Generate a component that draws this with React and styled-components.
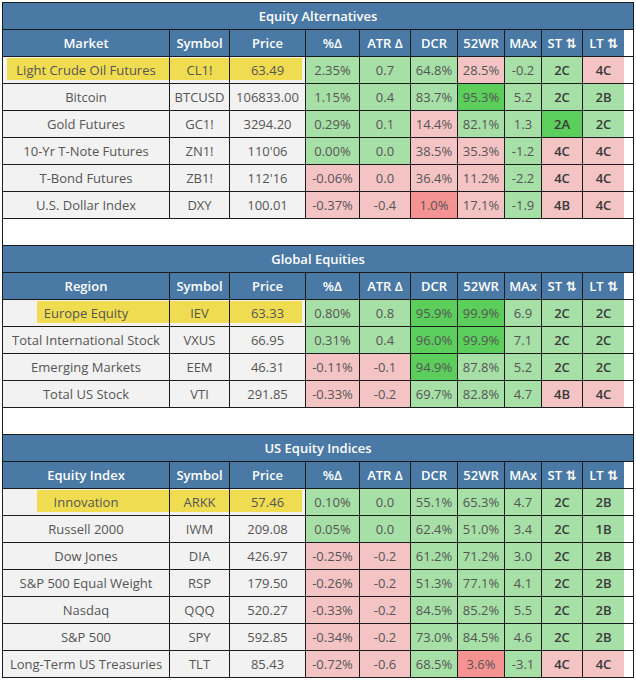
import React from "react";
import styled, { createGlobalStyle } from "styled-components";

const GlobalStyle = createGlobalStyle`
  body {
    margin: 0;
    background: #ffffff;
    font-family: "Open Sans", "DejaVu Sans", sans-serif;
  }
`

const COLS = "167px 60px 76px 54px 51px 47px 47px 37px 41px 41px"

const TONES = {
  n: "#f2f2f2",
  g: "#a7e0a7",
  d: "#5bce5b",
  p: "#f4c4c4",
  r: "#f59393",
}

const Board = styled.div`
  width: 630px;
  margin: 2px 0 0 2px;
  border: 1px solid #1b1b1b;
  border-bottom: none;
`

const TitleRow = styled.div`
  height: 26px;
  display: flex;
  align-items: center;
  justify-content: center;
  background: #4a79a5;
  color: #ffffff;
  font-size: 13px;
  font-weight: 600;
  border-bottom: 1px solid #1b1b1b;
`

const Row = styled.div`
  display: grid;
  grid-template-columns: ${COLS};
  height: 26px;
  border-bottom: 1px solid #1b1b1b;
`

const Spacer = styled.div`
  height: 26px;
  background: #ffffff;
  border-bottom: 1px solid #1b1b1b;
`

const HeadCell = styled.div`
  display: flex;
  align-items: center;
  justify-content: center;
  background: #4a79a5;
  color: #ffffff;
  font-size: 13px;
  font-weight: 600;
  white-space: nowrap;
  border-right: 1px solid #1b1b1b;
  &:last-child { border-right: none; }
`

const Cell = styled.div`
  display: flex;
  align-items: center;
  justify-content: center;
  white-space: nowrap;
  font-size: 13px;
  color: ${props => props.$bold ? "#3a3a3a" : "#555555"};
  font-weight: ${props => props.$bold ? 600 : 400};
  background: ${props => props.$mark
    ? `linear-gradient(#f0dc50, #f0dc50) ${props.$markLeft}px 1px / calc(100% - ${props.$markLeft + props.$markRight}px) 22px no-repeat, ${TONES.n}`
    : TONES[props.$tone || "n"]};
  border-right: 1px solid #1b1b1b;
  &:last-child { border-right: none; }
`

const HEADERS = ["Symbol", "Price", "%Δ", "ATR Δ", "DCR", "52WR", "MAx", "ST ⇅", "LT ⇅"]

const SECTIONS = [
  {
    title: "Equity Alternatives",
    label: "Market",
    markLeft: 4,
    rows: [
      ["Light Crude Oil Futures", "CL1!", "63.49", "2.35%:g", "0.7:g", "64.8%:g", "28.5%:p", "-0.2:g", "2C:g", "4C:p"],
      ["Bitcoin", "BTCUSD", "106833.00", "1.15%:g", "0.4:g", "83.7%:g", "95.3%:d", "5.2:g", "2C:g", "2B:g"],
      ["Gold Futures", "GC1!", "3294.20", "0.29%:g", "0.1:g", "14.4%:p", "82.1%:g", "1.3:g", "2A:d", "2C:g"],
      ["10-Yr T-Note Futures", "ZN1!", "110'06", "0.00%:g", "0.0:g", "38.5%:p", "35.3%:p", "-1.2:g", "4C:p", "4C:p"],
      ["T-Bond Futures", "ZB1!", "112'16", "-0.06%:p", "0.0:p", "36.4%:p", "11.2%:p", "-2.2:g", "4C:p", "4C:p"],
      ["U.S. Dollar Index", "DXY", "100.01", "-0.37%:p", "-0.4:p", "1.0%:r", "17.1%:p", "-1.9:g", "4B:p", "4C:p"],
    ],
  },
  {
    title: "Global Equities",
    label: "Region",
    markLeft: 34,
    rows: [
      ["Europe Equity", "IEV", "63.33", "0.80%:g", "0.8:g", "95.9%:d", "99.9%:d", "6.9:g", "2C:g", "2C:g"],
      ["Total International Stock", "VXUS", "66.95", "0.31%:g", "0.4:g", "96.0%:d", "99.9%:d", "7.1:g", "2C:g", "2C:g"],
      ["Emerging Markets", "EEM", "46.31", "-0.11%:p", "-0.1:p", "94.9%:d", "87.8%:g", "5.2:g", "2C:g", "2C:g"],
      ["Total US Stock", "VTI", "291.85", "-0.33%:p", "-0.2:p", "69.7%:g", "82.8%:g", "4.7:g", "4B:p", "4C:p"],
    ],
  },
  {
    title: "US Equity Indices",
    label: "Equity Index",
    markLeft: 34,
    rows: [
      ["Innovation", "ARKK", "57.46", "0.10%:g", "0.0:g", "55.1%:g", "65.3%:g", "4.7:g", "2C:g", "2B:g"],
      ["Russell 2000", "IWM", "209.08", "0.05%:g", "0.0:g", "62.4%:g", "51.0%:g", "3.4:g", "2C:g", "1B:g"],
      ["Dow Jones", "DIA", "426.97", "-0.25%:p", "-0.2:p", "61.2%:g", "71.2%:g", "3.0:g", "2C:g", "2B:g"],
      ["S&P 500 Equal Weight", "RSP", "179.50", "-0.26%:p", "-0.2:p", "51.3%:g", "77.1%:g", "4.1:g", "2C:g", "2B:g"],
      ["Nasdaq", "QQQ", "520.27", "-0.33%:p", "-0.2:p", "84.5%:g", "85.2%:g", "5.5:g", "2C:g", "2B:g"],
      ["S&P 500", "SPY", "592.85", "-0.34%:p", "-0.2:p", "73.0%:g", "84.5%:g", "4.6:g", "2C:g", "2B:g"],
      ["Long-Term US Treasuries", "TLT", "85.43", "-0.72%:p", "-0.6:p", "68.5%:g", "3.6%:r", "-3.1:g", "4C:p", "4C:p"],
    ],
  },
]

function DataRow({ row, highlight, markLeft }) {
  return (
    <Row>
      {row.map((raw, i) => {
        if (i < 3) {
          return (
            <Cell
              key={i}
              $mark={highlight}
              $markLeft={i === 0 ? markLeft : 0}
              $markRight={i === 2 ? 3 : 0}
            >
              {raw}
            </Cell>
          )
        }
        const [value, tone] = raw.split(":")
        return (
          <Cell key={i} $tone={tone} $bold={i >= 8}>
            {value}
          </Cell>
        )
      })}
    </Row>
  )
}

function Section({ section, first }) {
  return (
    <>
      {!first && <Spacer />}
      <TitleRow>{section.title}</TitleRow>
      <Row>
        {[section.label, ...HEADERS].map((h, i) => <HeadCell key={i}>{h}</HeadCell>)}
      </Row>
      {section.rows.map((row, i) => (
        <DataRow key={i} row={row} highlight={i === 0} markLeft={section.markLeft} />
      ))}
    </>
  )
}

export default function App() {
  return (
    <>
      <GlobalStyle />
      <Board>
        {SECTIONS.map((s, i) => <Section key={i} section={s} first={i === 0} />)}
      </Board>
    </>
  )
}
